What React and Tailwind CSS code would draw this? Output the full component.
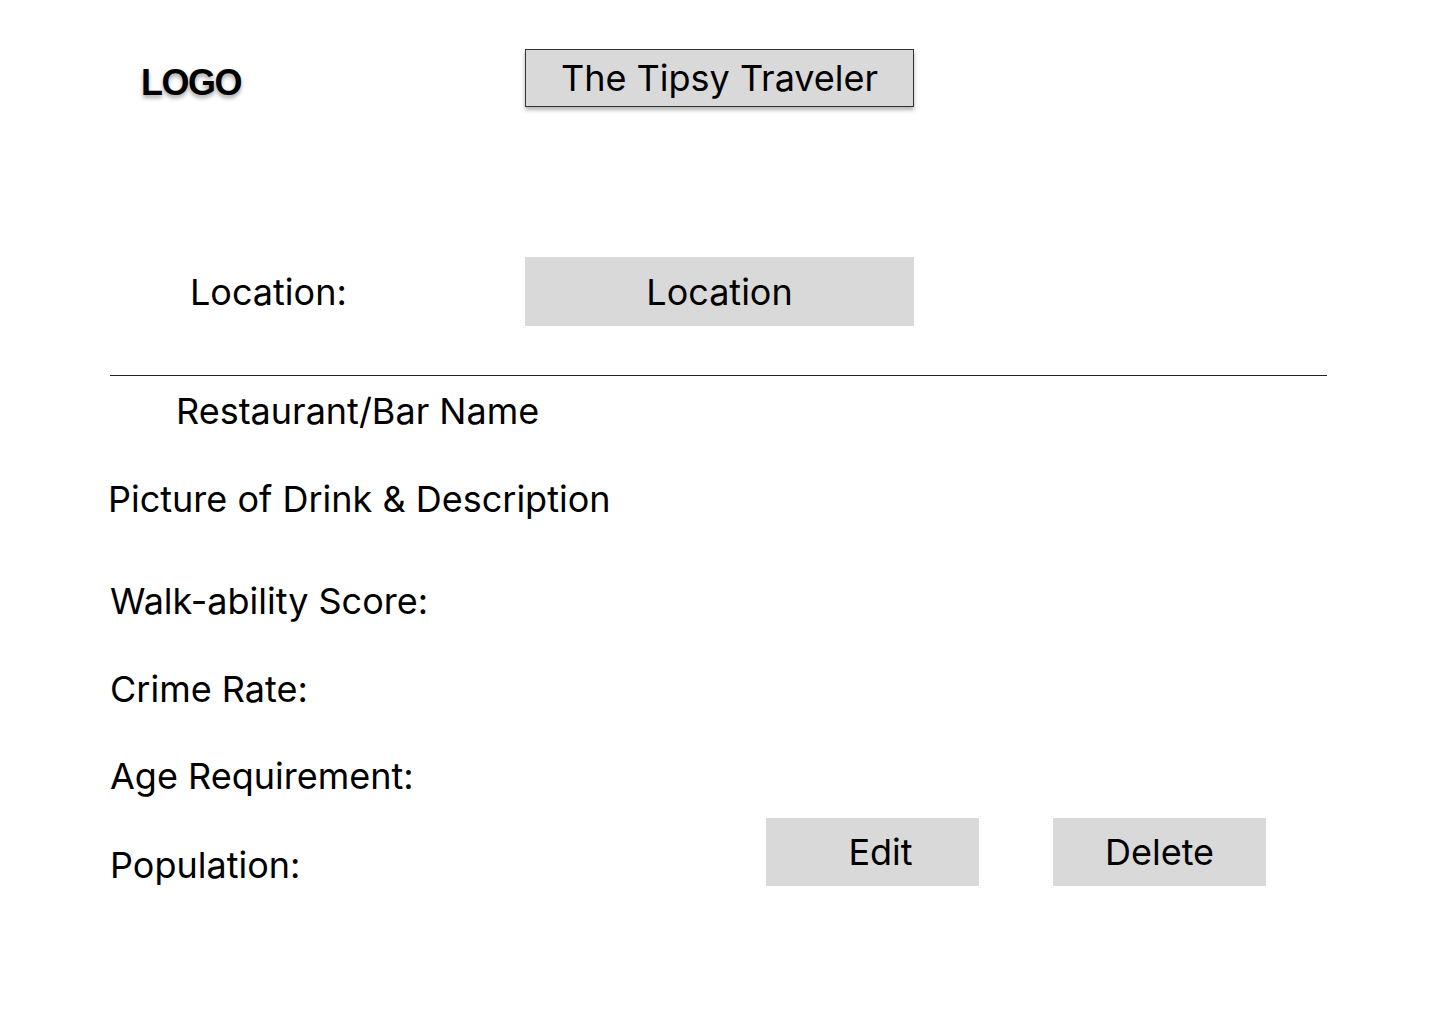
export default function App() {
  const inter = 'font-["Inter",sans-serif] text-[36px] leading-none text-black';

  return (
    <div className="w-[1440px] h-[1024px] bg-white text-black">
      {/* header */}
      <div className="flex items-start pt-[49px]">
        <div className="w-[525px] pl-[141px] pt-[16px]">
          <span className="font-['Liberation_Sans',Arial,sans-serif] font-bold text-[36px] tracking-[-1.5px] leading-none [text-shadow:0_3px_4px_rgba(0,0,0,0.35)]">
            LOGO
          </span>
        </div>
        <div className={`w-[389px] h-[58px] bg-[#d9d9d9] border border-[#333] shadow-[0_3px_4px_rgba(0,0,0,0.3)] flex items-center justify-center ${inter}`}>
          The Tipsy Traveler
        </div>
      </div>

      {/* location */}
      <div className="flex items-center mt-[150px]">
        <div className={`w-[525px] pl-[190px] ${inter}`}>Location:</div>
        <div className={`w-[389px] h-[69px] bg-[#d9d9d9] flex items-center justify-center ${inter}`}>
          Location
        </div>
      </div>

      <div className="ml-[110px] mt-[49px] w-[1217px] h-px bg-[#222]" />

      <div className={`pl-[176px] mt-[17px] ${inter}`}>Restaurant/Bar Name</div>

      <div className={`pl-[108px] mt-[52px] ${inter}`}>Picture of Drink &amp; Description</div>
      <div className={`pl-[110px] mt-[66px] ${inter}`}>Walk-ability Score:</div>
      <div className={`pl-[110px] mt-[52px] ${inter}`}>Crime Rate:</div>
      <div className={`pl-[110px] mt-[51px] ${inter}`}>Age Requirement:</div>

      <div className="flex items-center mt-[24px]">
        <div className={`w-[766px] pl-[110px] pt-[26px] ${inter}`}>Population:</div>
        <div className={`w-[213px] h-[68px] bg-[#d9d9d9] flex items-center justify-center pl-[16px] ${inter}`}>Edit</div>
        <div className={`ml-[74px] w-[213px] h-[68px] bg-[#d9d9d9] flex items-center justify-center ${inter}`}>Delete</div>
      </div>
    </div>
  );
}
